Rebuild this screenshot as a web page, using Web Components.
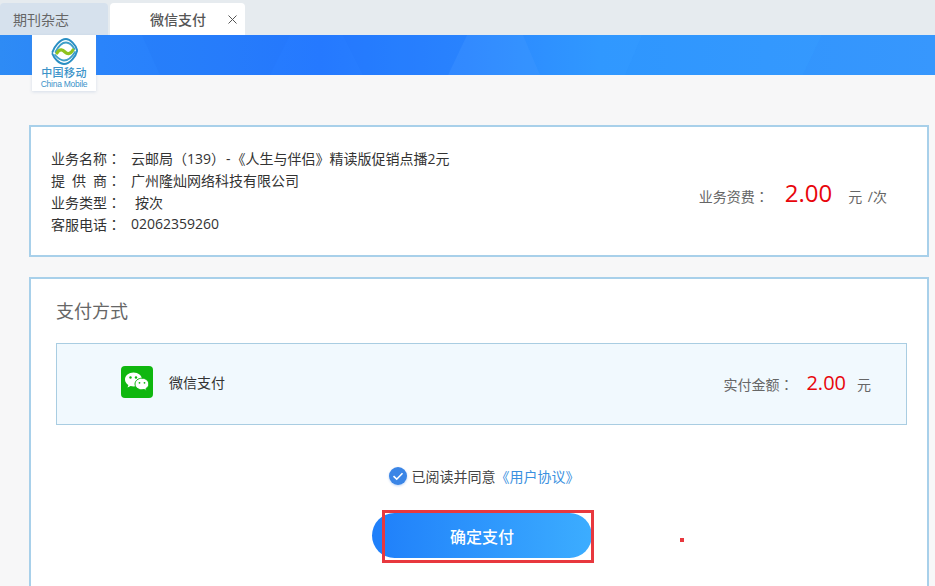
<!DOCTYPE html>
<html lang="zh">
<head>
<meta charset="utf-8">
<title>微信支付</title>
<style>
  html, body { margin: 0; padding: 0; height: 586px; overflow: hidden; background: #f7f7f8; }
  body { font-family: "Open Sans", "Noto Sans CJK SC", sans-serif; color: #333; }
</style>
</head>
<body>
<tab-bar></tab-bar>
<top-banner></top-banner>
<page-main>
  <service-card></service-card>
  <payment-card></payment-card>
</page-main>

<script>
const FONT = `"Open Sans", "Noto Sans CJK SC", sans-serif`;
// the colon of the original sits in the middle of its cell, as in the TC cut
const COLON = `<span lang="zh-TW" style='font-family:"Noto Sans CJK TC",sans-serif'>：</span>`;

class TabBar extends HTMLElement {
  constructor() {
    super();
    this.attachShadow({mode: "open"}).innerHTML = `
    <style>
      :host { display: flex; height: 35px; box-sizing: border-box; padding-top: 3px; gap: 2px; background: #e6ebef; font-family: ${FONT}; font-size: 14px; }
      .tab { box-sizing: border-box; height: 32px; display: flex; align-items: center; border-radius: 4px 4px 0 0; }
      .off { width: 108px; padding-left: 13px; background: #d6e1ed; color: #666; }
      .on { width: 135px; padding-left: 40px; background: #fff; color: #555; font-weight: 500; }
      svg { margin-left: 22px; }
    </style>
    <div class="tab off">期刊杂志</div>
    <div class="tab on">微信支付
      <svg width="9" height="9" viewBox="0 0 9 9"><path d="M.5.5l8 8M8.5.5l-8 8" stroke="#555" fill="none"/></svg>
    </div>`;
  }
}

class TopBanner extends HTMLElement {
  constructor() {
    super();
    this.attachShadow({mode: "open"}).innerHTML = `
    <style>
      :host { display: block; position: relative; height: 40px; background: linear-gradient(90deg, #2e8bf5 0, #2a84fb 100px, #2579ff 320px, #2b86ff 467px, #3098ff 600px, #3a9cff 935px); font-family: ${FONT}; }
      .shapes { position: absolute; inset: 0; width: 100%; height: 100%; }
      .logo { position: absolute; left: 32px; top: 0; width: 64px; height: 56px; background: #fff; box-shadow: 0 1px 3px rgba(120,150,190,.25); display: flex; flex-direction: column; align-items: center; color: #3b93c9; }
      .logo svg { margin-top: 3px; }
      .cn { font-size: 11px; line-height: 11px; margin-top: 2px; letter-spacing: .4px; font-weight: 500; white-space: nowrap; }
      .en { font-family: "Liberation Sans", sans-serif; font-size: 8.5px; line-height: 10px; margin-top: 1px; white-space: nowrap; letter-spacing: -.25px; }
    </style>
    <svg class="shapes" viewBox="0 0 935 40" preserveAspectRatio="none">
      <path d="M142 0h148l-20 40h-110z" fill="#1b6cf0" opacity=".1"/>
      <path d="M343 0h124l-19 40h-85z" fill="#1b6cf0" opacity=".08"/>
      <path d="M467 0h56l17 40h-92z" fill="#fff" opacity=".035"/>
      <path d="M642 0h180l-19 40h-178z" fill="#1b6cf0" opacity=".05"/>
      <path d="M822 0h113v40h-132z" fill="#1b6cf0" opacity=".1"/>
    </svg>
    <div class="logo">
      <svg width="27" height="27" viewBox="0 0 27 27" fill="none" stroke-linecap="round">
        <path d="M1.500 14C3 9 9 1 15 1c4 0 10 6 11 11" stroke="#2a8fc4" stroke-width="2"/>
        <path d="M4.500 14C7 9 11 4.500 15 4.500c3 0 6.500 3 8.500 6.500" stroke="#3f9fc8" stroke-width="1.800"/>
        <path d="M6 15c3-5 6-3 8-1s5 3 8-2" stroke="#8fc31f" stroke-width="3.200"/>
        <path d="M1.500 16C3 20 8 26 13 26c6 0 12-8 13-13" stroke="#2a8fc4" stroke-width="2"/>
        <path d="M4 17c2 2 5 5.500 9 5.500s8-3.500 11-8.500" stroke="#3f9fc8" stroke-width="1.800"/>
      </svg>
      <div class="cn">中国移动</div>
      <div class="en">China Mobile</div>
    </div>`;
  }
}

class PageMain extends HTMLElement {
  constructor() {
    super();
    this.attachShadow({mode: "open"}).innerHTML = `
    <style>
      :host { display: flex; flex-direction: column; gap: 20px; padding: 50px 6px 0 29px; font-family: ${FONT}; }
    </style>
    <slot></slot>`;
  }
}

class ServiceCard extends HTMLElement {
  constructor() {
    super();
    this.attachShadow({mode: "open"}).innerHTML = `
    <style>
      :host { display: flex; justify-content: space-between; align-items: center; box-sizing: border-box; height: 132px; padding: 0 40px 0 20px; background: #fff; border: 2px solid #a8d0ea; color: #333; font-size: 14px; }
      .rows { display: grid; grid-template-columns: 80px auto; grid-auto-rows: 22px; align-items: center; margin-top: -1px; }
      .fee { display: flex; align-items: baseline; color: #666; word-spacing: 2px; margin-top: 2px; }
      .fee b { font-weight: normal; font-size: 24px; color: #e8060c; margin: 0 16px 0 16px; }
      .indent { padding-left: 4px; }
      .spaced { letter-spacing: 7px; }
      .dash { margin: 0 1px; }
    </style>
    <div class="rows">
      <span>业务名称${COLON}</span><span>云邮局（139）<span class="dash">-</span>《人生与伴侣》精读版促销点播2元</span>
      <span><span class="spaced">提供</span>商${COLON}</span><span>广州隆灿网络科技有限公司</span>
      <span>业务类型${COLON}</span><span class="indent">按次</span>
      <span>客服电话${COLON}</span><span>02062359260</span>
    </div>
    <div class="fee"><span>业务资费${COLON}</span><b>2.00</b><span>元 /次</span></div>`;
  }
}

class PaymentCard extends HTMLElement {
  constructor() {
    super();
    this.attachShadow({mode: "open"}).innerHTML = `
    <style>
      :host { display: block; box-sizing: border-box; height: 320px; padding: 20px 20px 0 25px; background: #fff; border: 2px solid #a8d0ea; border-bottom: 0; }
      h2 { margin: 0; font-weight: normal; font-size: 18px; line-height: 24px; color: #666; }
    </style>
    <h2>支付方式</h2>
    <pay-option></pay-option>
    <agree-line></agree-line>
    <pay-button></pay-button>`;
  }
}

class PayOption extends HTMLElement {
  constructor() {
    super();
    this.attachShadow({mode: "open"}).innerHTML = `
    <style>
      :host { display: flex; align-items: center; box-sizing: border-box; height: 82px; margin-top: 20px; padding: 0 35px 4px 64px; background: #f1f9fe; border: 1px solid #a9cde2; font-size: 14px; color: #333; }
      .icon { width: 32px; height: 32px; margin-right: 16px; }
      .name { flex: 1; }
      .sum { display: flex; align-items: baseline; color: #666; margin-top: 1px; }
      .sum b { font-weight: normal; font-size: 20px; color: #e8060c; margin: 0 11px 0 13px; }
    </style>
    <svg class="icon" viewBox="0 0 32 32">
      <rect width="32" height="32" rx="4" fill="#0fb70f"/>
      <path d="M12.500 6.500C7.800 6.500 4 9.600 4 13.500c0 2.300 1.300 4.200 3.400 5.500l-.9 2.500 3.100-1.500c1 .3 1.900.4 2.900.4 4.700 0 8.500-3.100 8.500-6.900s-3.800-7-8.500-7z" fill="#fff"/>
      <path d="M27.800 18c0-3.200-3.100-5.800-6.900-5.800S14 14.800 14 18s3.100 5.800 6.900 5.800c.8 0 1.600-.1 2.300-.3l2.300 1.200-.6-2c1.700-1.100 2.900-2.800 2.900-4.700z" fill="#fff" stroke="#0fb70f"/>
      <circle cx="9.500" cy="11.500" r="1.200" fill="#0fb70f"/><circle cx="15" cy="11.500" r="1.200" fill="#0fb70f"/>
      <circle cx="18.500" cy="16.800" r=".9" fill="#0fb70f"/><circle cx="23.500" cy="16.800" r=".9" fill="#0fb70f"/>
    </svg>
    <span class="name">微信支付</span>
    <div class="sum"><span>实付金额${COLON}</span><b>2.00</b><span>元</span></div>`;
  }
}

class AgreeLine extends HTMLElement {
  constructor() {
    super();
    this.attachShadow({mode: "open"}).innerHTML = `
    <style>
      :host { display: flex; align-items: center; justify-content: center; height: 20px; margin-top: 41px; padding-left: 5px; font-size: 14px; color: #444; }
      svg { margin-right: 5px; filter: drop-shadow(0 1px 1px rgba(60,130,230,.35)); }
      a { color: #3a90e0; text-decoration: none; }
    </style>
    <svg width="18" height="18" viewBox="0 0 18 18">
      <circle cx="9" cy="9" r="9" fill="#3a85e6"/>
      <path d="M4.500 9.200l3.200 3 5.800-6" fill="none" stroke="#fff" stroke-width="1.600"/>
    </svg>
    <span>已阅读并同意</span>
    <a>《用户协议》</a>`;
  }
}

class PayButton extends HTMLElement {
  constructor() {
    super();
    this.attachShadow({mode: "open"}).innerHTML = `
    <style>
      :host { display: block; position: relative; width: 220px; height: 45px; margin: 27px 0 0 316px; }
      button { display: block; width: 100%; height: 100%; padding: 0; border: 0; border-radius: 23px; background: linear-gradient(90deg, #1f7ffa, #3cadff); color: #fff; font: 500 16px ${FONT}; }
      .mark { position: absolute; left: 10px; top: -3px; width: 212px; height: 53px; box-sizing: border-box; border: 3px solid #e8383e; }
      .dot { position: absolute; left: 308px; top: 25px; width: 4px; height: 4px; background: #e8383e; }
    </style>
    <button>确定支付</button>
    <div class="mark"></div>
    <div class="dot"></div>`;
  }
}

customElements.define("tab-bar", TabBar);
customElements.define("top-banner", TopBanner);
customElements.define("page-main", PageMain);
customElements.define("service-card", ServiceCard);
customElements.define("payment-card", PaymentCard);
customElements.define("pay-option", PayOption);
customElements.define("agree-line", AgreeLine);
customElements.define("pay-button", PayButton);
</script>
</body>
</html>
